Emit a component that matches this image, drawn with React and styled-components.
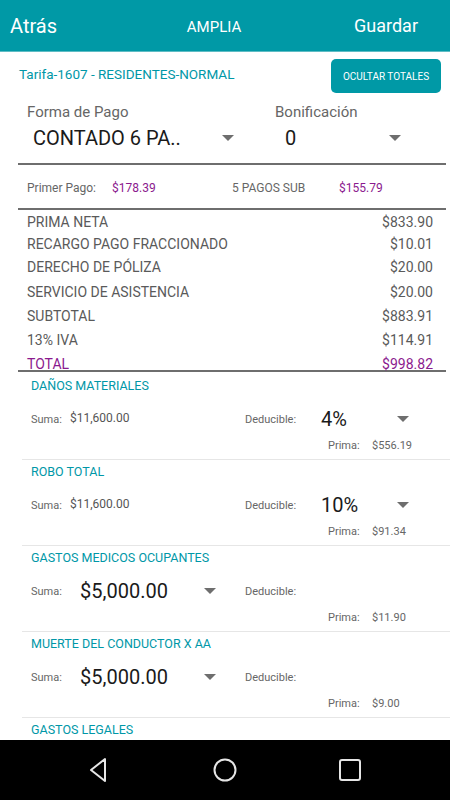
import React from "react";
import styled, { createGlobalStyle } from "styled-components";

const GlobalStyle = createGlobalStyle`
  html, body {
    margin: 0;
    padding: 0;
    background: #ffffff;
  }
  body {
    font-family: Roboto, "Noto Sans", "Liberation Sans", sans-serif;
  }
  * {
    box-sizing: border-box;
  }
`;

const Screen = styled.div`
  width: 450px;
  height: 800px;
  display: flex;
  flex-direction: column;
  overflow: hidden;
  background: #ffffff;
`;

const Header = styled.div`
  height: 52px;
  flex-shrink: 0;
  background: #0099a6;
  border-bottom: 1px solid #5fbcc4;
  display: grid;
  grid-template-columns: 1fr auto 1fr;
  align-items: center;
  padding: 1px 32px 0 10px;
  color: #ffffff;
`;

const HeaderLink = styled.span`
  font-size: ${(p) => p.size}px;
  justify-self: ${(p) => p.align};
  line-height: 1;
`;

const Title = styled.span`
  font-size: 15px;
  line-height: 1;
  margin-top: 2px;
`;

const Content = styled.div`
  flex: 1;
  overflow: hidden;
`;

const TopRow = styled.div`
  height: 47px;
  display: flex;
  align-items: center;
  justify-content: space-between;
  padding: 0 9px 0 19px;
`;

const Tarifa = styled.span`
  color: #0097a7;
  font-size: 13.5px;
  margin-top: -4px;
`;

const Button = styled.button`
  width: 110px;
  height: 34px;
  margin-top: 1px;
  border: none;
  border-radius: 5px;
  background: #0099a6;
  color: #ffffff;
  font-family: Roboto, "Liberation Sans", sans-serif;
  font-size: 10px;
  padding: 0;
`;

const Selectors = styled.div`
  display: flex;
  padding: 4px 0 0 27px;
`;

const SelectCol = styled.div`
  width: ${(p) => p.width}px;
  display: flex;
  flex-direction: column;
`;

const SelectLabel = styled.span`
  font-size: 15px;
  line-height: 18px;
  color: #666666;
`;

const Dropdown = styled.div`
  display: flex;
  align-items: center;
  justify-content: space-between;
  width: ${(p) => p.width}px;
  padding-left: ${(p) => p.indent || 0}px;
  margin-top: ${(p) => p.gap || 0}px;
`;

const DropValue = styled.span`
  font-size: 20px;
  line-height: ${(p) => p.lh || 24}px;
  color: #1a1a1a;
`;

const Caret = styled.span`
  width: 0;
  height: 0;
  border-left: 6px solid transparent;
  border-right: 6px solid transparent;
  border-top: 6px solid #6e6e6e;
  flex-shrink: 0;
`;

const Rule = styled.div`
  height: 2px;
  background: #6e6e6e;
  margin: ${(p) => p.top || 0}px 4px 0 18px;
`;

const PaymentRow = styled.div`
  height: 43px;
  display: flex;
  align-items: center;
  padding: 3px 0 0 27px;
  font-size: 12px;
`;

const PayLabel = styled.span`
  width: ${(p) => p.width}px;
  color: #666666;
`;

const PayValue = styled.span`
  width: ${(p) => p.width}px;
  color: #8b1a8e;
`;

const Totals = styled.div`
  padding: 1px 17px 0 27px;
`;

const TotalRow = styled.div`
  height: ${(p) => p.h}px;
  display: flex;
  align-items: ${(p) => (p.accent ? "flex-start" : "center")};
  justify-content: space-between;
  font-size: 14px;
  line-height: 16px;
  color: ${(p) => (p.accent ? "#8b1a8e" : "#5a5a5a")};

  span {
    margin-top: ${(p) => (p.accent ? 4 : 0)}px;
  }
`;

const Coverage = styled.div`
  margin-left: 22px;
  padding: ${(p) => (p.first ? 2 : 0)}px 0 6px 9px;
  border-bottom: 1px solid #e6e6e6;
`;

const CoverageTitle = styled.div`
  height: 22px;
  display: flex;
  align-items: center;
  font-size: 12.5px;
  color: #0097a7;
`;

const CoverageRow = styled.div`
  height: 36px;
  margin-top: 5px;
  display: flex;
  align-items: center;
`;

const Field = styled.div`
  width: ${(p) => p.width}px;
  display: flex;
  align-items: center;
`;

const SmallLabel = styled.span`
  width: ${(p) => p.width}px;
  font-size: 11px;
  color: #666666;
  flex-shrink: 0;
`;

const SmallValue = styled.span`
  font-size: 12px;
  color: #555555;
  margin-top: -3px;
`;

const PrimaRow = styled.div`
  height: 16px;
  display: flex;
  align-items: center;
  padding-left: 297px;
  font-size: 11px;
  color: #666666;
`;

const NavBar = styled.div`
  height: 60px;
  flex-shrink: 0;
  background: #000000;
  display: flex;
  align-items: center;
  justify-content: center;
  gap: 95px;
`;

const NavIcon = styled.svg`
  width: 30px;
  height: 30px;
`;

const totals = [
  ["PRIMA NETA", "$833.90", 22],
  ["RECARGO PAGO FRACCIONADO", "$10.01", 22],
  ["DERECHO DE PÓLIZA", "$20.00", 24],
  ["SERVICIO DE ASISTENCIA", "$20.00", 25],
  ["SUBTOTAL", "$883.91", 24],
  ["13% IVA", "$114.91", 24],
];

const coverages = [
  { title: "DAÑOS MATERIALES", suma: "$11,600.00", ded: "4%", prima: "$556.19" },
  { title: "ROBO TOTAL", suma: "$11,600.00", ded: "10%", prima: "$91.34" },
  { title: "GASTOS MEDICOS OCUPANTES", suma: "$5,000.00", select: true, prima: "$11.90" },
  { title: "MUERTE DEL CONDUCTOR X AA", suma: "$5,000.00", select: true, prima: "$9.00" },
  { title: "GASTOS LEGALES", suma: "$5,000.00", select: true, prima: "$5.00" },
];

function CoverageBlock({ item, first }) {
  return (
    <Coverage first={first}>
      <CoverageTitle>{item.title}</CoverageTitle>
      <CoverageRow>
        <Field width={214}>
          {item.select ? (
            <>
              <SmallLabel width={49}>Suma:</SmallLabel>
              <Dropdown width={136}>
                <DropValue lh={36}>{item.suma}</DropValue>
                <Caret />
              </Dropdown>
            </>
          ) : (
            <>
              <SmallLabel width={39}>Suma:</SmallLabel>
              <SmallValue>{item.suma}</SmallValue>
            </>
          )}
        </Field>
        <Field width={170}>
          <SmallLabel width={76}>Deducible:</SmallLabel>
          {item.ded && (
            <Dropdown width={88}>
              <DropValue lh={36}>{item.ded}</DropValue>
              <Caret />
            </Dropdown>
          )}
        </Field>
      </CoverageRow>
      <PrimaRow>
        <SmallLabel width={44}>Prima:</SmallLabel>
        <span>{item.prima}</span>
      </PrimaRow>
    </Coverage>
  );
}

export default function App() {
  return (
    <Screen>
      <GlobalStyle />
      <Header>
        <HeaderLink size={20} align="start">Atrás</HeaderLink>
        <Title>AMPLIA</Title>
        <HeaderLink size={18} align="end">Guardar</HeaderLink>
      </Header>
      <Content>
        <TopRow>
          <Tarifa>Tarifa-1607 - RESIDENTES-NORMAL</Tarifa>
          <Button>OCULTAR TOTALES</Button>
        </TopRow>
        <Selectors>
          <SelectCol width={248}>
            <SelectLabel>Forma de Pago</SelectLabel>
            <Dropdown width={207} indent={6} gap={5}>
              <DropValue>CONTADO 6 PA..</DropValue>
              <Caret />
            </Dropdown>
          </SelectCol>
          <SelectCol width={140}>
            <SelectLabel>Bonificación</SelectLabel>
            <Dropdown width={126} indent={10} gap={5}>
              <DropValue>0</DropValue>
              <Caret />
            </Dropdown>
          </SelectCol>
        </Selectors>
        <Rule top={13} />
        <PaymentRow>
          <PayLabel width={85}>Primer Pago:</PayLabel>
          <PayValue width={120}>$178.39</PayValue>
          <PayLabel width={107}>5 PAGOS SUB</PayLabel>
          <PayValue width={80}>$155.79</PayValue>
        </PaymentRow>
        <Rule />
        <Totals>
          {totals.map(([label, value, h]) => (
            <TotalRow key={label} h={h}>
              <span>{label}</span>
              <span>{value}</span>
            </TotalRow>
          ))}
          <TotalRow h={18} accent>
            <span>TOTAL</span>
            <span>$998.82</span>
          </TotalRow>
        </Totals>
        <Rule />
        {coverages.map((c, i) => (
          <CoverageBlock key={c.title} item={c} first={i === 0} />
        ))}
      </Content>
      <NavBar>
        <NavIcon viewBox="0 0 30 30">
          <path
            d="M20 4 L20 26 L6 15 Z"
            fill="none"
            stroke="#e6e6e6"
            strokeWidth="2"
            strokeLinejoin="round"
          />
        </NavIcon>
        <NavIcon viewBox="0 0 30 30">
          <circle cx="15" cy="15" r="10.5" fill="none" stroke="#e6e6e6" strokeWidth="2" />
        </NavIcon>
        <NavIcon viewBox="0 0 30 30">
          <rect x="5" y="5" width="20" height="20" rx="2" fill="none" stroke="#e6e6e6" strokeWidth="2" />
        </NavIcon>
      </NavBar>
    </Screen>
  );
}
